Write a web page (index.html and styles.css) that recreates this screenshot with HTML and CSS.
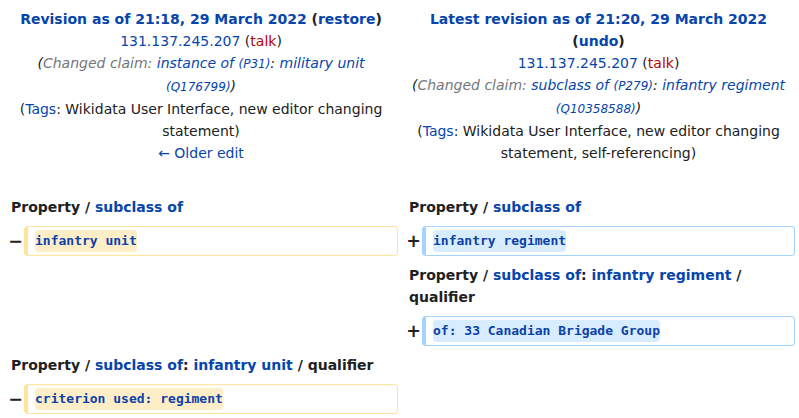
FILE: index.html
```html
<!DOCTYPE html>
<html lang="en">
<head>
<meta charset="utf-8">
<title>Diff</title>
<link rel="stylesheet" href="styles.css">
</head>
<body>
<div class="diff">
  <div class="title">
    <div><b><a class="link">Revision as of 21:18, 29 March 2022</a> (<a class="link">restore</a>)</b></div>
    <div><a class="link">131.137.245.207</a> (<a class="new">talk</a>)</div>
    <div class="comment">(<span class="auto">Changed claim: </span><a class="link">instance of <span class="id">(P31)</span></a>: <a class="link">military unit <span class="id">(Q176799)</span></a>)</div>
    <div>(<a class="link">Tags</a>: Wikidata User Interface, new editor changing statement)</div>
    <div><a class="link">← Older edit</a></div>
  </div>
  <div class="title">
    <div><b><a class="link">Latest revision as of 21:20, 29 March 2022</a> (<a class="link">undo</a>)</b></div>
    <div><a class="link">131.137.245.207</a> (<a class="new">talk</a>)</div>
    <div class="comment">(<span class="auto">Changed claim: </span><a class="link">subclass of <span class="id">(P279)</span></a>: <a class="link">infantry regiment <span class="id">(Q10358588)</span></a>)</div>
    <div>(<a class="link">Tags</a>: Wikidata User Interface, new editor changing statement, self-referencing)</div>
  </div>

  <div class="lineno">Property / <a class="link">subclass of</a></div>
  <div class="lineno">Property / <a class="link">subclass of</a></div>

  <div class="marker">−</div>
  <div class="line del"><span class="change">infantry unit</span></div>
  <div class="marker">+</div>
  <div class="line ins"><span class="change">infantry regiment</span></div>

  <div class="empty"></div>
  <div class="lineno">Property / <a class="link">subclass of</a>: <a class="link">infantry regiment</a> / qualifier</div>

  <div class="empty"></div>
  <div class="marker">+</div>
  <div class="line ins"><span class="change">of: 33 Canadian Brigade Group</span></div>

  <div class="lineno">Property / <a class="link">subclass of</a>: <a class="link">infantry unit</a> / qualifier</div>
  <div class="empty"></div>

  <div class="marker">−</div>
  <div class="line del"><span class="change">criterion used: regiment</span></div>
  <div class="empty"></div>
</div>
</body>
</html>
```
FILE: styles.css
```css
html, body {
  margin: 0;
  padding: 0;
  background: #ffffff;
}
body {
  font-family: "DejaVu Sans", sans-serif;
  font-size: 14px;
  line-height: 22px;
  color: #202122;
}
.diff {
  display: grid;
  grid-template-columns: 22px 376px 22px 375px;
  row-gap: 8px;
  padding-top: 8px;
}
.title {
  grid-column: span 2;
  text-align: center;
  padding: 0 5px 24px 9px;
}
.link {
  color: #0645ad;
  text-decoration: none;
}
.new {
  color: #ba0000;
}
.comment {
  font-style: italic;
}
.auto {
  color: #72777d;
}
.id {
  font-size: 12px;
}
.lineno {
  grid-column: span 2;
  font-weight: bold;
  padding: 0 7px 0 11px;
}
.empty {
  grid-column: span 2;
}
.marker {
  align-self: center;
  text-align: right;
  font-weight: bold;
  font-size: 17.5px;
  line-height: 21px;
  padding-right: 0;
  margin-right: -1px;
}
.line {
  margin-left: 2px;
  border-style: solid;
  border-width: 1px 1px 1px 4px;
  border-radius: 4px;
  padding: 3px 7px;
  line-height: 22px;
  font-family: "DejaVu Sans Mono", monospace;
  font-size: 13px;
  font-weight: bold;
  color: #0b41a8;
}
.del {
  border-color: #ffe49c;
}
.ins {
  border-color: #a3d3ff;
}
.change {
  display: inline-block;
  vertical-align: top;
  line-height: 16px;
  padding: 3px 0;
  border-radius: 4px;
}
.del .change {
  background: #feeec8;
}
.ins .change {
  background: #d8ecff;
}
```
